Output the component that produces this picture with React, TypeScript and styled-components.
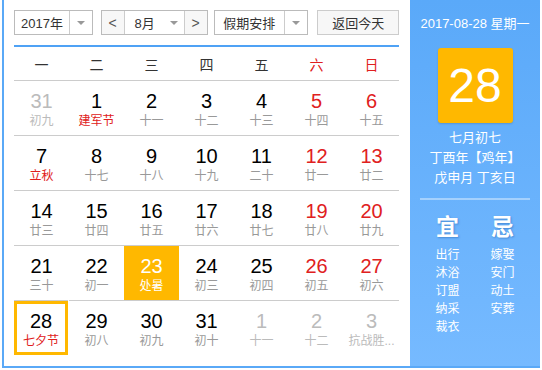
import React from "react";
import styled, { createGlobalStyle } from "styled-components";

type Day = {
  n: number;
  lunar: string;
  other?: boolean;
  weekend?: boolean;
  festival?: boolean;
  selected?: boolean;
  today?: boolean;
};

const weeks: Day[][] = [
  [
    { n: 31, lunar: "初九", other: true },
    { n: 1, lunar: "建军节", festival: true },
    { n: 2, lunar: "十一" },
    { n: 3, lunar: "十二" },
    { n: 4, lunar: "十三" },
    { n: 5, lunar: "十四", weekend: true },
    { n: 6, lunar: "十五", weekend: true },
  ],
  [
    { n: 7, lunar: "立秋", festival: true },
    { n: 8, lunar: "十七" },
    { n: 9, lunar: "十八" },
    { n: 10, lunar: "十九" },
    { n: 11, lunar: "二十" },
    { n: 12, lunar: "廿一", weekend: true },
    { n: 13, lunar: "廿二", weekend: true },
  ],
  [
    { n: 14, lunar: "廿三" },
    { n: 15, lunar: "廿四" },
    { n: 16, lunar: "廿五" },
    { n: 17, lunar: "廿六" },
    { n: 18, lunar: "廿七" },
    { n: 19, lunar: "廿八", weekend: true },
    { n: 20, lunar: "廿九", weekend: true },
  ],
  [
    { n: 21, lunar: "三十" },
    { n: 22, lunar: "初一" },
    { n: 23, lunar: "处暑", selected: true },
    { n: 24, lunar: "初三" },
    { n: 25, lunar: "初四" },
    { n: 26, lunar: "初五", weekend: true },
    { n: 27, lunar: "初六", weekend: true },
  ],
  [
    { n: 28, lunar: "七夕节", festival: true, today: true },
    { n: 29, lunar: "初八" },
    { n: 30, lunar: "初九" },
    { n: 31, lunar: "初十" },
    { n: 1, lunar: "十一", other: true },
    { n: 2, lunar: "十二", other: true },
    { n: 3, lunar: "抗战胜...", other: true },
  ],
];

const weekNames = ["一", "二", "三", "四", "五", "六", "日"];
const yi = ["出行", "沐浴", "订盟", "纳采", "裁衣"];
const ji = ["嫁娶", "安门", "动土", "安葬"];

const App: React.FC = () => {
  return (
    <>
      <GlobalStyle />
      <Frame>
        <Main>
          <Toolbar>
            <Select $width={79} $text={55}>
              <span>2017年</span>
              <Arrow />
            </Select>
            <MonthGroup>
              <NavButton>&lt;</NavButton>
              <MonthSelect>
                <span>8月</span>
                <Arrow />
              </MonthSelect>
              <NavButton>&gt;</NavButton>
            </MonthGroup>
            <Select $width={95} $text={70}>
              <span>假期安排</span>
              <Arrow />
            </Select>
            <TodayButton>返回今天</TodayButton>
          </Toolbar>
          <Grid>
            {weekNames.map((w, i) => (
              <WeekHead key={w} $red={i >= 5}>
                {w}
              </WeekHead>
            ))}
            {weeks.flat().map((d, i) => (
              <Cell key={i} $selected={d.selected} $today={d.today}>
                <DayNum $other={d.other} $weekend={d.weekend} $selected={d.selected}>
                  {d.n}
                </DayNum>
                <Lunar $other={d.other} $festival={d.festival} $selected={d.selected}>
                  {d.lunar}
                </Lunar>
              </Cell>
            ))}
          </Grid>
        </Main>
        <Side>
          <DateLine>2017-08-28 星期一</DateLine>
          <BigDay>28</BigDay>
          <LunarInfo>
            <div>七月初七</div>
            <div>丁酉年【鸡年】</div>
            <div>戊申月 丁亥日</div>
          </LunarInfo>
          <Divider />
          <Almanac>
            <AlmanacCol>
              <AlmanacHead>宜</AlmanacHead>
              {yi.map((t) => (
                <div key={t}>{t}</div>
              ))}
            </AlmanacCol>
            <AlmanacCol>
              <AlmanacHead>忌</AlmanacHead>
              {ji.map((t) => (
                <div key={t}>{t}</div>
              ))}
            </AlmanacCol>
          </Almanac>
        </Side>
      </Frame>
    </>
  );
};

const GlobalStyle = createGlobalStyle`
  body {
    margin: 0;
    background: #fff;
    font-family: "Liberation Sans", Arial, "Noto Sans CJK SC", sans-serif;
  }
`;

const Frame = styled.div`
  display: flex;
  width: 538px;
  height: 368px;
  margin-left: 2px;
  box-sizing: border-box;
  border-left: 2px solid #5aa9f7;
  border-bottom: 2px solid #5aa9f7;
`;

const Main = styled.div`
  width: 406px;
  padding: 10px 11px 0 10px;
  box-sizing: border-box;
`;

const Toolbar = styled.div`
  display: flex;
  align-items: center;
  height: 25px;
  padding-bottom: 10px;
  border-bottom: 2px solid #4fa2f5;
  font-size: 13px;
  color: #333;
`;

const Select = styled.div<{ $width: number; $text: number }>`
  display: grid;
  grid-template-columns: ${(p) => p.$text}px 1fr;
  width: ${(p) => p.$width}px;
  height: 25px;
  margin-right: 8px;
  box-sizing: border-box;
  border: 1px solid #bbb;
  background: #fff;

  & > span {
    display: flex;
    align-items: center;
    justify-content: center;
    border-right: 1px solid #ccc;
  }
`;

const Arrow = styled.i`
  display: block;
  align-self: center;
  justify-self: center;
  width: 0;
  height: 0;
  border-left: 4px solid transparent;
  border-right: 4px solid transparent;
  border-top: 4px solid #999;
`;

const MonthGroup = styled.div`
  display: flex;
  height: 25px;
  margin-right: 6px;
  box-sizing: border-box;
  border: 1px solid #bbb;
`;

const NavButton = styled.div`
  width: 22px;
  display: flex;
  align-items: center;
  justify-content: center;
  background: #f7f7f7;
  color: #555;
  font-size: 14px;
`;

const MonthSelect = styled.div`
  display: grid;
  grid-template-columns: 40px 1fr;
  width: 59px;
  border-left: 1px solid #ccc;
  border-right: 1px solid #ccc;
  background: #fff;

  & > span {
    display: flex;
    align-items: center;
    justify-content: center;
  }
`;

const TodayButton = styled.div`
  width: 82px;
  height: 25px;
  margin-left: 1px;
  box-sizing: border-box;
  border: 1px solid #ccc;
  background: #f7f7f7;
  display: flex;
  align-items: center;
  justify-content: center;
`;

const Grid = styled.div`
  display: grid;
  grid-template-columns: repeat(7, 55px);
  grid-template-rows: 33px repeat(5, 55px);
`;

const WeekHead = styled.div<{ $red?: boolean }>`
  display: flex;
  align-items: center;
  justify-content: center;
  padding-top: 1px;
  font-size: 14px;
  color: ${(p) => (p.$red ? "#e02020" : "#333")};
`;

const Cell = styled.div<{ $selected?: boolean; $today?: boolean }>`
  display: flex;
  flex-direction: column;
  align-items: center;
  padding-top: 10px;
  box-sizing: border-box;
  border-top: 1px solid #ccc;
  background: ${(p) => (p.$selected ? "#ffb800" : "transparent")};
  background-clip: padding-box;
  ${(p) => (p.$today ? "box-shadow: inset 0 0 0 3px #ffb800; margin-right: 1px;" : "")}
`;

const DayNum = styled.div<{ $other?: boolean; $weekend?: boolean; $selected?: boolean }>`
  font-size: 20px;
  line-height: 20px;
  color: ${(p) =>
    p.$selected ? "#fff" : p.$other ? "#bbb" : p.$weekend ? "#e02020" : "#000"};
`;

const Lunar = styled.div<{ $other?: boolean; $festival?: boolean; $selected?: boolean }>`
  margin-top: 3px;
  font-size: 12px;
  line-height: 14px;
  white-space: nowrap;
  color: ${(p) =>
    p.$selected ? "#fff" : p.$other ? "#bbb" : p.$festival ? "#e02020" : "#999"};
`;

const Side = styled.div`
  width: 130px;
  background: linear-gradient(#5aa9f9, #76baff);
  color: #fff;
  display: flex;
  flex-direction: column;
  align-items: center;
`;

const DateLine = styled.div`
  margin-top: 16px;
  font-size: 13px;
  line-height: 16px;
`;

const BigDay = styled.div`
  width: 75px;
  height: 75px;
  margin-top: 16px;
  border-radius: 3px;
  background: #ffb800;
  display: flex;
  align-items: center;
  justify-content: center;
  font-size: 48px;
  box-shadow: 0 1px 2px rgba(0, 0, 0, 0.15);
`;

const LunarInfo = styled.div`
  margin-top: 5px;
  font-size: 13px;
  line-height: 20px;
  text-align: center;
`;

const Divider = styled.div`
  width: 110px;
  height: 2px;
  margin-top: 10px;
  background: rgba(255, 255, 255, 0.4);
`;

const Almanac = styled.div`
  display: grid;
  grid-template-columns: 55px 55px;
  margin-top: 14px;
  font-size: 12px;
  line-height: 18px;
`;

const AlmanacCol = styled.div`
  display: flex;
  flex-direction: column;
  align-items: center;
`;

const AlmanacHead = styled.div`
  font-size: 23px;
  line-height: 26px;
  font-weight: bold;
  margin-bottom: 6px;
  text-shadow: 1px 1px 2px rgba(0, 60, 140, 0.35);
`;

export default App;
